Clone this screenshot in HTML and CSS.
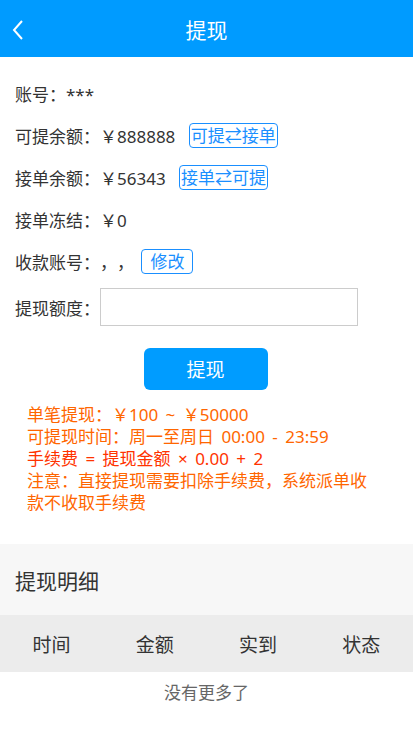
FILE: index.html
```html
<!DOCTYPE html>
<html lang="zh-CN">

<head>
    <meta charset="UTF-8">
    <meta name="viewport" content="width=device-width, initial-scale=1.0">
    <title>提现</title>
    <link rel="stylesheet" href="styles.css">
</head>

<body>
    <div class="header">
        <div class="back">
            <svg width="14" height="22" viewBox="0 0 14 22"><path d="M11 2 L3 11 L11 20" fill="none" stroke="#fff" stroke-width="2"/></svg>
        </div>
        <div class="title">提现</div>
    </div>

    <div class="info">
        <div class="row">账号：***</div>
        <div class="row">可提余额：￥888888 <span class="tag">可提⇄接单</span></div>
        <div class="row">接单余额：￥56343 <span class="tag">接单⇄可提</span></div>
        <div class="row">接单冻结：￥0</div>
        <div class="row">收款账号：，， <span class="tag tag-edit">修改</span></div>
        <div class="row row-input">提现额度：<input class="amount" type="text"></div>
    </div>

    <div class="submit-wrap">
        <button class="submit">提现</button>
    </div>

    <div class="notes">
        <p>单笔提现：￥100 ~ ￥50000</p>
        <p>可提现时间：周一至周日 00:00 - 23:59</p>
        <p class="red">手续费 = 提现金额 × 0.00 + 2</p>
        <p>注意：直接提现需要扣除手续费，系统派单收款不收取手续费</p>
    </div>

    <div class="detail-title">提现明细</div>
    <div class="thead">
        <div>时间</div>
        <div>金额</div>
        <div>实到</div>
        <div>状态</div>
    </div>
    <div class="nomore">没有更多了</div>
</body>

</html>
```

FILE: styles.css
```css
* {
    box-sizing: border-box;
}

body {
    margin: 0;
    font-family: "Noto Sans", "Noto Sans CJK SC", sans-serif;
    color: #333;
    background: #fff;
    text-spacing-trim: space-all;
}

/* 顶部 */
.header {
    height: 57px;
    background: #009bff;
    display: flex;
    align-items: center;
    justify-content: center;
    position: relative;
}

.back {
    position: absolute;
    left: 11px;
    top: 19px;
    width: 14px;
    height: 22px;
}

.back svg {
    display: block;
}

.title {
    color: #fff;
    font-size: 21px;
    margin-top: 1px;
}

/* 信息行 */
.info {
    padding: 15px 15px 0;
}

.row {
    height: 42px;
    display: flex;
    align-items: center;
    font-size: 17px;
    white-space: pre;
}

.tag {
    display: inline-block;
    margin-left: 9px;
    padding: 0 1px;
    height: 25px;
    line-height: 23px;
    border: 1px solid #1a8fff;
    border-radius: 4px;
    color: #1a8fff;
    font-size: 17px;
}

.tag-edit {
    margin-left: 3px;
    padding: 0 8px;
}

.row-input {
    height: 50px;
}

.amount {
    width: 258px;
    height: 38px;
    border: 1px solid #ccc;
    margin: 0;
    font-size: 16px;
}

/* 提现按钮 */
.submit-wrap {
    display: flex;
    justify-content: center;
    padding-top: 16px;
    padding-right: 2px;
}

.submit {
    width: 124px;
    height: 42px;
    border: none;
    border-radius: 6px;
    background: #009cff;
    color: #fff;
    font-size: 19px;
    font-family: inherit;
}

/* 说明 */
.notes {
    padding: 14px 36px 0 27px;
    color: #ff6600;
    font-size: 17px;
    line-height: 22px;
    word-spacing: 3px;
}

.notes p {
    margin: 0;
}

.notes .red {
    color: #ff3300;
}

/* 明细 */
.detail-title {
    margin-top: 30px;
    height: 71px;
    background: #f7f7f7;
    padding-left: 15px;
    display: flex;
    align-items: center;
    font-size: 21px;
}

.thead {
    height: 57px;
    background: #ececec;
    display: flex;
    align-items: center;
}

.thead div {
    flex: 1;
    text-align: center;
    font-size: 19px;
}

.nomore {
    text-align: center;
    color: #666;
    font-size: 17px;
    padding-top: 7px;
}
```
